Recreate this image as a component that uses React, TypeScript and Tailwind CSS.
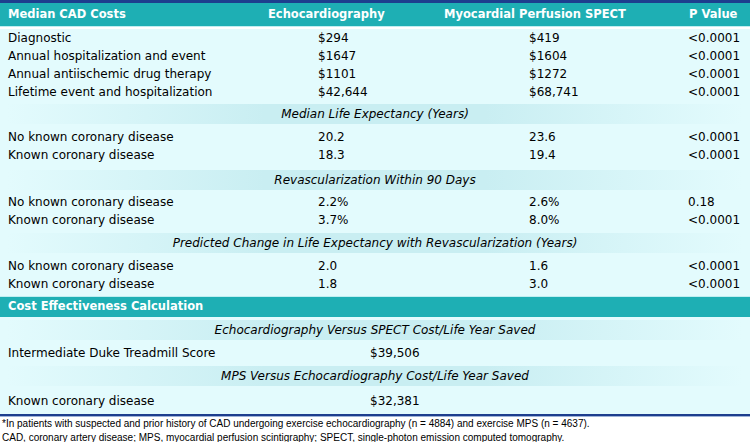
import React from "react";

const font = { fontFamily: '"DejaVu Sans", Verdana, sans-serif' };

function Row({ label, a, b, p, mt = "" }: { label: string; a: string; b: string; p: string; mt?: string }) {
  return (
    <div className={`grid h-[18px] grid-cols-[310px_211px_159px_1fr] items-center pl-2 text-[12px] leading-[18px] text-black ${mt}`}>
      <div>{label}</div>
      <div>{a}</div>
      <div>{b}</div>
      <div>{p}</div>
    </div>
  );
}

function Band({ text, mt = "" }: { text: string; mt?: string }) {
  return (
    <div
      className={`mx-[7px] flex h-[20px] items-center justify-center bg-[linear-gradient(90deg,#e3fbfd_0%,#c9eef2_35%,#c9eef2_65%,#e3fbfd_100%)] text-[12px] italic text-black ${mt}`}
    >
      {text}
    </div>
  );
}

function Row2({ label, v, mt = "" }: { label: string; v: string; mt?: string }) {
  return (
    <div className={`grid h-[18px] grid-cols-[362px_1fr] items-center pl-2 text-[12px] leading-[18px] text-black ${mt}`}>
      <div>{label}</div>
      <div>{v}</div>
    </div>
  );
}

const LT = "<0.0001";

export default function App() {
  return (
    <div className="h-[442px] w-[750px] overflow-hidden bg-white" style={font}>
      <div className="h-[3px] bg-[#1d3e8e]" />
      <div className="grid h-[23px] grid-cols-[260px_176px_245px_1fr] items-center bg-[#1eafb4] pl-2 text-[11.5px] font-bold text-white">
        <div>Median CAD Costs</div>
        <div>Echocardiography</div>
        <div>Myocardial Perfusion SPECT</div>
        <div>P Value</div>
      </div>
      <div className="h-px bg-[#bfeef1]" />
      <div className="bg-[#e3fbfd] pb-[4px]">
        <Row mt="mt-[2px]" label="Diagnostic" a="$294" b="$419" p={LT} />
        <Row label="Annual hospitalization and event" a="$1647" b="$1604" p={LT} />
        <Row label="Annual antiischemic drug therapy" a="$1101" b="$1272" p={LT} />
        <Row label="Lifetime event and hospitalization" a="$42,644" b="$68,741" p={LT} />
        <Band mt="mt-[3px]" text="Median Life Expectancy (Years)" />
        <Row mt="mt-[4px]" label="No known coronary disease" a="20.2" b="23.6" p={LT} />
        <Row label="Known coronary disease" a="18.3" b="19.4" p={LT} />
        <Band mt="mt-[6px]" text="Revascularization Within 90 Days" />
        <Row mt="mt-[3px]" label="No known coronary disease" a="2.2%" b="2.6%" p="0.18" />
        <Row label="Known coronary disease" a="3.7%" b="8.0%" p={LT} />
        <Band mt="mt-[4px]" text="Predicted Change in Life Expectancy with Revascularization (Years)" />
        <Row mt="mt-[4px]" label="No known coronary disease" a="2.0" b="1.6" p={LT} />
        <Row label="Known coronary disease" a="1.8" b="3.0" p={LT} />
        <div className="mt-[3px] h-px bg-[#bfeef1]" />
        <div className="flex h-[20px] items-center bg-[#1eafb4] pl-2 text-[11.5px] font-bold text-white">
          Cost Effectiveness Calculation
        </div>
        <Band mt="mt-[3px]" text="Echocardiography Versus SPECT Cost/Life Year Saved" />
        <Row2 mt="mt-[4px]" label="Intermediate Duke Treadmill Score" v="$39,506" />
        <Band mt="mt-[4px]" text="MPS Versus Echocardiography Cost/Life Year Saved" />
        <Row2 mt="mt-[6px]" label="Known coronary disease" v="$32,381" />
      </div>
      <div className="h-[2px] bg-[#1d3e8e]" />
      <div className="h-px bg-[#9fb3d8]" />
      <div
        className="pl-[2px] text-[10px] leading-[14px] text-black"
        style={{ fontFamily: '"Liberation Sans", Arial, sans-serif' }}
      >
        <div>*In patients with suspected and prior history of CAD undergoing exercise echocardiography (n = 4884) and exercise MPS (n = 4637).</div>
        <div>CAD, coronary artery disease; MPS, myocardial perfusion scintigraphy; SPECT, single-photon emission computed tomography.</div>
      </div>
    </div>
  );
}
